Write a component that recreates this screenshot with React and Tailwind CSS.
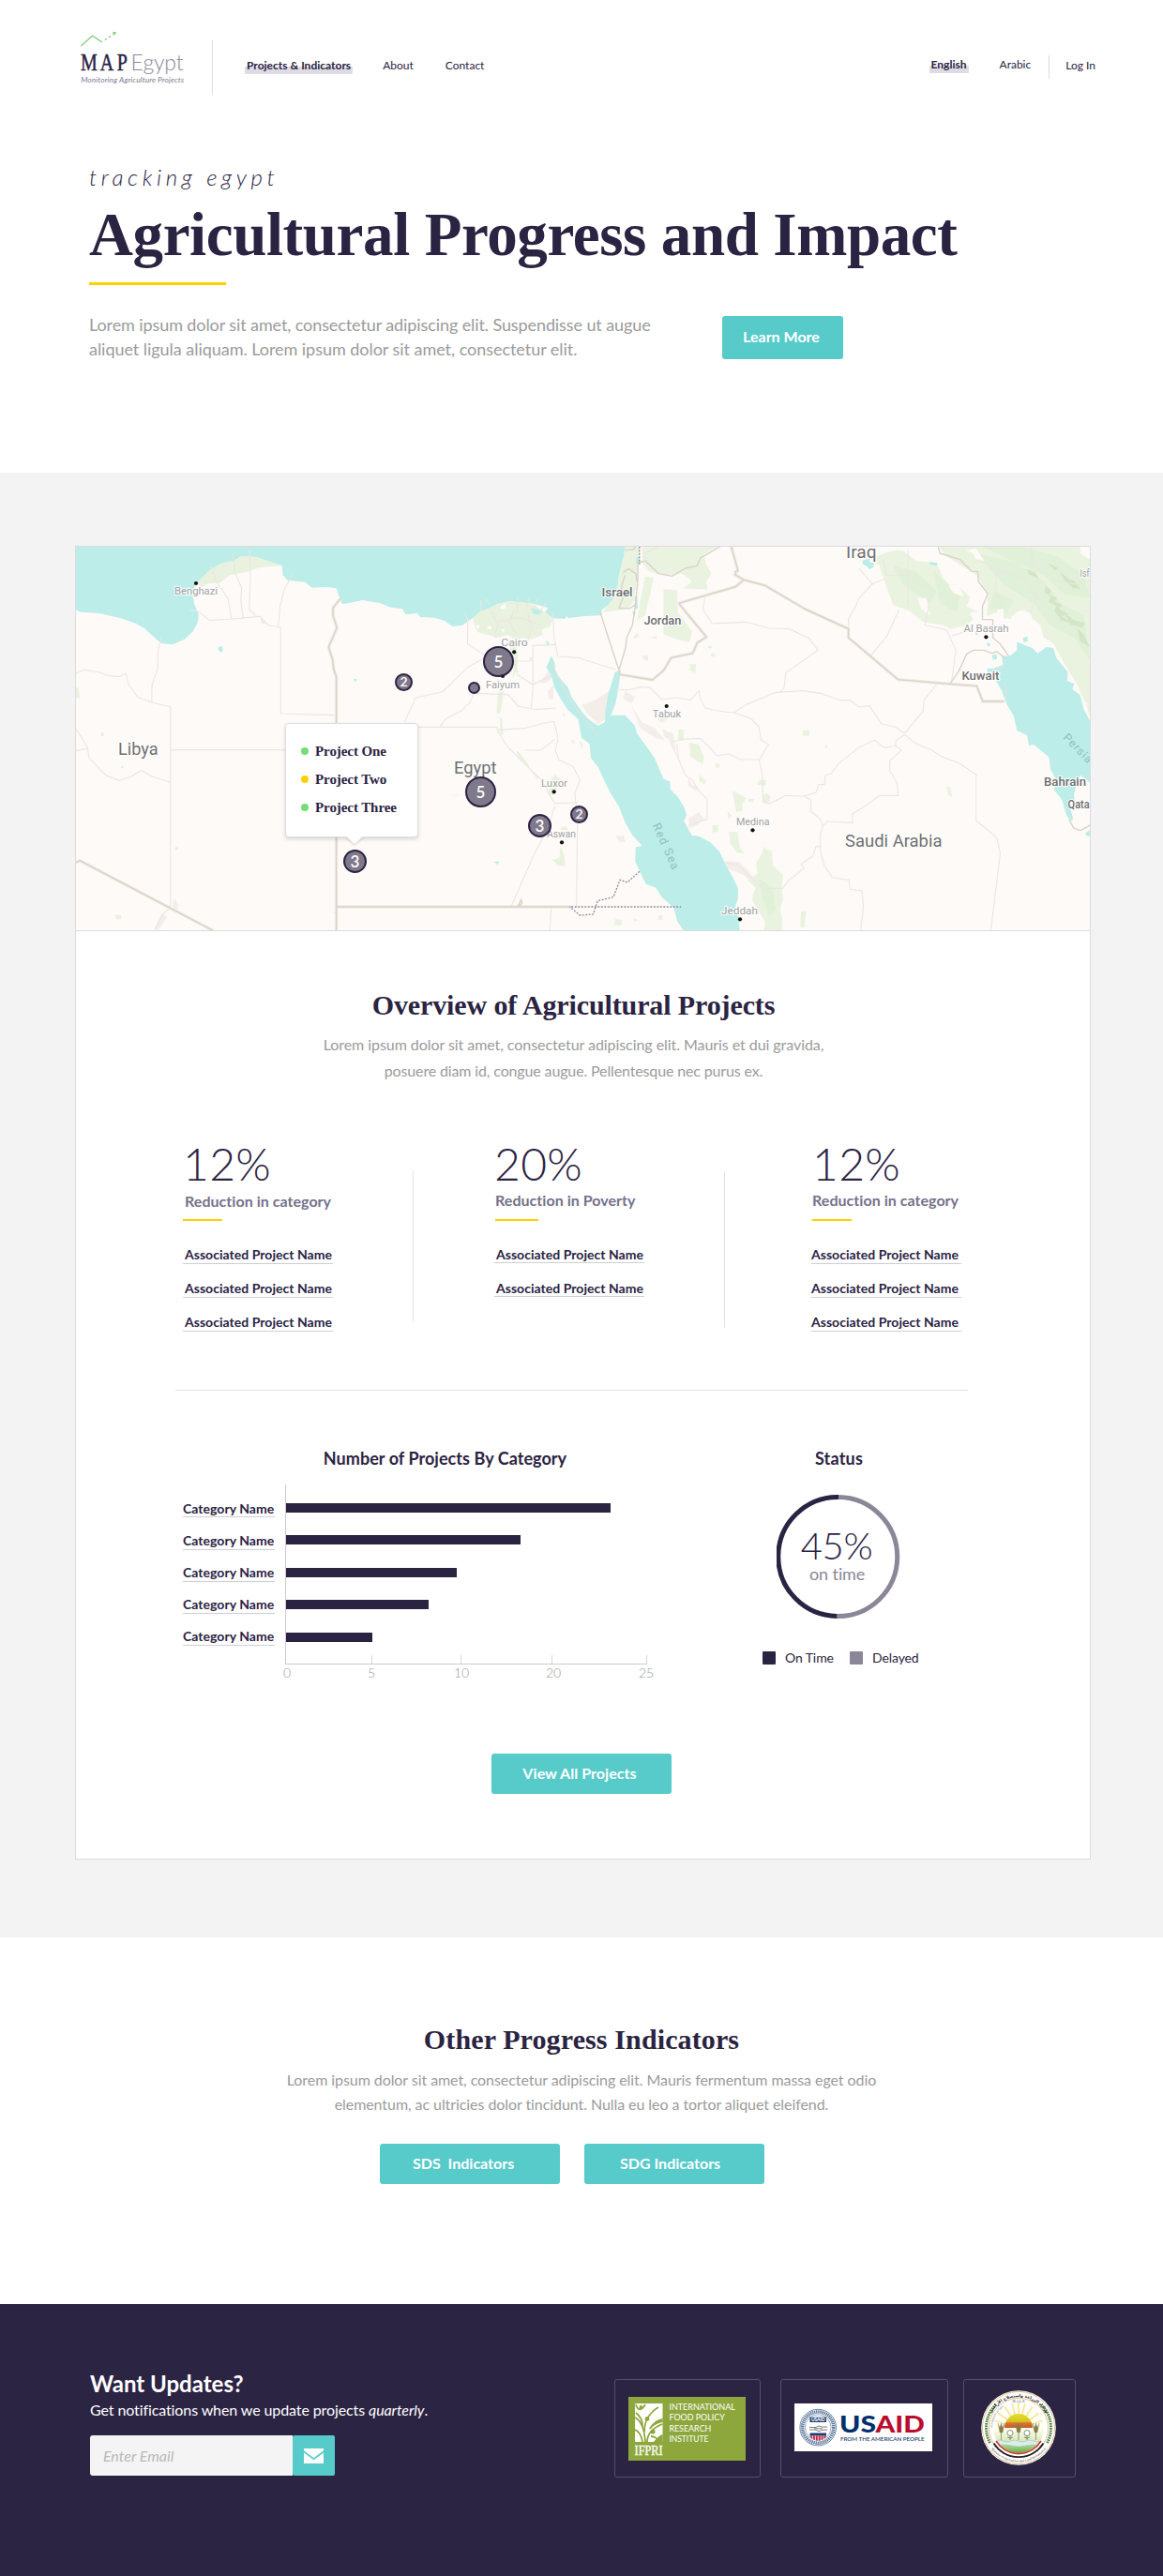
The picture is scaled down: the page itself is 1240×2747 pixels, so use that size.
import React from 'react';

const INK = '#2b2342';

function Logo() {
  return (
    <svg className="ml-[84px] mt-[30px] h-[64px] w-[116px] shrink-0" viewBox="84 30 116 64">
      <g fill="none" stroke="#8fd18a" strokeWidth="1.5">
        <path d="M86.4 49 L98.4 38.2 L108.8 44.8" />
        <path d="M111.8 42.6 L121.5 36" strokeDasharray="2.4 2.6" />
      </g>
      <path d="M119.8 34 H124 L122.4 38 Z" fill="#8fd18a" />
      <g transform="translate(86 75) scale(0.8 1)">
        <text fontFamily="Liberation Serif, serif" fontSize="25" fill={INK} stroke={INK} strokeWidth="0.5">
          <tspan x="0">M</tspan>
          <tspan x="26">A</tspan>
          <tspan x="48.5">P</tspan>
        </text>
      </g>
      <text x="139.6" y="75" fontFamily="Lato, sans-serif" fontWeight="300" fontSize="23" fill="#8a8799" textLength="56">Egypt</text>
      <text x="86.2" y="88.3" fontFamily="Lato, sans-serif" fontStyle="italic" fontSize="8.4" fill="#817d92" textLength="110">Monitoring Agriculture Projects</text>
    </svg>
  );
}

function Marked({ children }) {
  return (
    <span className="relative isolate block font-bold tracking-[0.01px]">
      <span className="absolute -left-[2px] -right-[2px] top-[9px] -z-10 h-[8px] bg-[#dddce2]" />
      {children}
    </span>
  );
}

function Header() {
  return (
    <header className="flex h-[120px] items-start text-[12px] leading-4 text-[#2b2342]">
      <Logo />
      <div className="ml-[26px] mt-[43px] h-[58px] w-px bg-[#dcdcdc]" />
      <nav className="ml-[36px] mt-[62px] flex">
        <Marked>Projects &amp; Indicators</Marked>
        <span className="ml-[34px]">About</span>
        <span className="ml-[34px]">Contact</span>
      </nav>
      <div className="ml-auto mr-[72px] mt-[59px] flex h-[25px] items-start">
        <span className="mt-[2px]"><Marked>English</Marked></span>
        <span className="ml-[35px] mt-[2px]">Arabic</span>
        <span className="ml-[19px] h-[25px] w-px bg-[#dcdcdc]" />
        <span className="ml-[17px] mt-[3px]">Log In</span>
      </div>
    </header>
  );
}

function Hero() {
  return (
    <section className="h-[384px] pl-[95px] pt-[53px]">
      <p className="text-[24px] font-light italic leading-8 tracking-[4.65px] text-[#2b2342]">tracking egypt</p>
      <h1 className="mt-[9px] whitespace-nowrap font-['Liberation_Serif',serif] text-[65px] font-bold leading-[72px] tracking-[-0.4px] text-[#2b2342]">
        Agricultural Progress and Impact
      </h1>
      <div className="mt-[15px] h-[3px] w-[146px] bg-[#ffd000]" />
      <div className="mt-[29px] flex items-start">
        <p className="w-[675px] text-[18px] leading-[26px] tracking-[-0.1px] text-[#9b9b9b]">
          Lorem ipsum dolor sit amet, consectetur adipiscing elit. Suspendisse ut augue
          <br />
          <span className="tracking-[-0.04px]">aliquet ligula aliquam. Lorem ipsum dolor sit amet, consectetur elit.</span>
        </p>
        <button className="mt-[4px] h-[46px] w-[129px] rounded-[3px] bg-[#56cbca] pb-[3px] pr-[3px] text-[16px] font-bold leading-5 text-white">Learn More</button>
      </div>
    </section>
  );
}

const cities = [
  ['Benghazi', 186, 634, 46], ['Cairo', 534.3, 688.7, 28.5], ['Faiyum', 518, 733.5, 36],
  ['Luxor', 577, 838.5, 28], ['Aswan', 583, 892.5, 31], ['Al Basrah', 1027.5, 673.5, 48],
  ['Tabuk', 695.7, 765, 30.5], ['Medina', 785, 880, 35.5], ['Jeddah', 769, 974.5, 39], ['Isf', 1151.5, 614.5, 10],
];
const smallCountries = [
  ['Israel', 641.5, 636, 33], ['Jordan', 686.4, 666, 40], ['Kuwait', 1025.4, 724.5, 40],
  ['Bahrain', 1113, 838, 45], ['Qata', 1138.6, 862, 23],
];
const bigCountries = [
  ['Libya', 126, 805, 42.5], ['Egypt', 484, 824.5, 45.5], ['Iraq', 902, 594.5, 32.5], ['Saudi Arabia', 901, 903, 103.5],
];
const dots = [
  [209, 622], [548.2, 695.3], [536, 721], [590.7, 844.3], [599, 898.3],
  [1051.4, 679.3], [710.7, 753], [802.5, 885.3], [789, 980.3],
];

function MapLabels({ items, size, fill, weight }) {
  return items.map(([t, x, y, w]) => (
    <text key={t} x={x} y={y} textLength={w} lengthAdjust="spacingAndGlyphs" fontSize={size} fill={fill} fontWeight={weight}
      stroke="#ffffff" strokeOpacity="0.8" strokeWidth="2.5" paintOrder="stroke" strokeLinejoin="round">{t}</text>
  ));
}

function MapDrawing() {
  return (
    <svg className="block h-[409px] w-[1081px]" viewBox="81 583 1081 409">
      <rect x="81" y="583" width="1081" height="409" fill="#fefaf7" />
      {/* western half */}
      <g transform="translate(70 570) scale(0.35714 0.33333)">
        <path fill="#bcede9" d="M30 30H1600V258L1568 260 1540 262 1500 268 1497 260 1490 270 1455 268 1430 250 1440 235 1400 222 1370 218 1325 214 1290 222 1262 238 1240 245 1215 268 1185 290 1155 294 1130 275 1100 266 1058 264 1050 252 1015 256 1005 238 970 233 940 220 885 210 850 218 825 222 817 200 808 172 780 168 735 170 715 152 662 146 648 130 646 100 600 84 570 72 525 70 500 85 465 92 430 115 405 140 388 158 378 190 385 225 397 255 395 280 380 310 355 335 320 352 285 348 260 325 235 300 210 285 165 268 100 252 45 248 30 240Z" />
        <g fill="#e9f2de">
          <path d="M388 158L430 115 465 92 500 85 525 70 570 72 600 84 646 100 580 105 540 120 490 130 460 155 425 157 410 168Z" />
          <path d="M1215 268L1240 245 1262 238 1290 222 1325 214 1370 218 1400 226 1440 255 1455 270 1445 295 1420 305 1425 320 1390 335 1360 330 1350 345 1320 320 1290 330 1230 312 1222 295Z" />
          <path d="M1335 340L1350 380 1348 430 1335 460 1340 400 1325 360Z" />
          <path d="M1296 490L1308 500 1303 540 1296 575 1286 570 1290 520ZM1296 585L1303 590 1306 640 1298 642ZM1345 690L1360 705 1385 740 1378 742 1355 720ZM1385 750L1415 778 1408 782ZM1445 790l16 -22 14 14 20 6 -30 25 -8 20 -16 2z" />
          <path d="M1478 995L1488 1025 1492 1062 1470 1060 1452 1040 1474 1035Z" />
          <path d="M30 490h8l4 32h-12zM105 633h9v12h-9zM146 1217h20v14h-14zM326 1002l10-6v12l-8 4zM1480 935h16l4 10h-22zM582 270h10l4 18-12-4zM165 740h8v8h-8zM1385 393h8v10h-8z" />
        </g>
        <g fill="#ffffff"><path d="M1300 228l14-6-2 14-12 4zM1222 290l14 0-4 12zM1300 300l10 6-4 10zM1256 300l12 -8 4 12z" /></g>
        <g fill="#f3eeea">
          <path d="M1415 475l30-45 8 30-20 14zM1440 500l18-20-4 50-12-6zM265 1262l20-50 18 12-25 40zM318 1195l4-32 16 22-6 16zM1155 835l12-5 8 3zM795 1210l14-8v10zM1532 660l14 10-4 20zM1482 570l8 4-2 16zM1508 655l12 6-4 14z" />
        </g>
        <g fill="#bcede9">
          <path d="M456 360l10-3 4 14-6 6-8-6zM858 460l14 4-8 7zM1278 1046l18 0-8 10zM1432 338l12 8-4 12z" />
          <path d="M1390 235l18 4 16 8-12 10-18-4z" />
        </g>
        <g fill="none" stroke="#ebe6e1" strokeWidth="1.1">
          <path vectorEffect="non-scaling-stroke" d="M30 445L55 433 100 440 130 452 160 455 180 445 188 480 215 520 257 537 313 552V1190M257 537L258 480 275 430 276 370 288 325M30 620L65 680 70 715 120 770 160 787 195 775 225 755 260 775 313 793M30 692L65 684M313 689H657M370 242L395 245 430 275 495 270 580 262 605 290 642 298V573L806 578M430 92L450 150 485 205 495 270M500 60L505 120 525 170 523 215 530 268M549 50L552 130 548 240 570 262M678 128L655 170 640 230 635 295" />
          <path vectorEffect="non-scaling-stroke" d="M1052 616H1288L1290 630 1320 680 1420 785 1460 860 1530 858M1012 600L1045 522 1125 503 1200 425 1290 370M1118 614L1135 590 1180 565 1205 540 1220 508 1320 512 1350 548 1400 560 1465 555M1200 270V350L1250 385M1290 625L1370 620 1420 605 1458 598 1470 650 1462 690 1472 720 1515 742 1535 785 1520 830 1528 900 1525 1190M1460 870L1440 940 1400 1020 1330 1190M1370 690L1420 690 1460 655M1395 355V490L1390 555M1395 405H1340M1395 355L1465 352M1455 250L1458 330 1470 390 1540 395M1450 1195L1445 1267M1240 210V245M1255 205L1265 225M1350 198L1348 250M1382 205L1375 240M1410 205L1398 240M1432 220L1418 245M1192 250L1202 275M1270 245L1290 290 1280 330M1340 240L1325 280 1345 320M1380 250L1390 300 1380 340M1290 280L1350 265 1420 290M1340 400L1350 450 1395 480 1470 440" />
          <path vectorEffect="non-scaling-stroke" d="M265 1267L290 1215 316 1190" />
        </g>
        <g fill="none" stroke="#efebe4" strokeWidth="3.4">
          <path vectorEffect="non-scaling-stroke" d="M820 205L798 235V260L810 298 785 360 797 400 800 430 808 455V1267M808 1191H1510M30 1050L42 1043 440 1267" />
        </g>
        <g fill="none" stroke="#d9d3c8" strokeWidth="1.4">
          <path vectorEffect="non-scaling-stroke" d="M820 205L798 235V260L810 298 785 360 797 400 800 430 808 455V1267M808 1191H1510M30 1050L42 1043 440 1267M1350 1190L1360 1168 1362 1180 1352 1192" />
        </g>
      </g>
      {/* eastern half */}
      <g transform="translate(620 570) scale(0.35714 0.33333)">
        <path fill="#bcede9" d="M-10 30H137L125 75 112 130 105 190 85 222 55 245 30 258 -10 262Z" />
        <g fill="#e9f3e0">
          <path d="M130 38L125 75 112 130 105 190 75 232 65 248 135 240 155 215 165 150 175 38Z" />
          <path d="M185 38H410L365 62 372 95 388 125 372 152 376 176 305 172 330 150 300 125 250 130 205 120 180 90ZM183 172L190 135 215 138 205 190 190 258 165 275ZM245 175L285 178 288 250 330 310 322 345 285 335 245 320ZM205 330l22-6-4 10zM182 388h18l-2 16-14-4zM320 415l22 0-2 28-22-12 10-6zM378 356h12v8h-12zM386 380l14 2-2 12-12-4zM155 325l12-10 6 12-16 6z" />
          <path d="M860 75L935 50 960 52 1000 85 1060 90 1080 140 1100 162 1120 160 1160 200 1150 230 1182 245 1180 262 1150 290 1105 302 1080 290 1020 280 980 245 930 225 905 150 890 100Z" />
          <path d="M1060 30H1530V565L1500 530 1480 480 1440 410 1410 350 1380 330 1370 290 1330 255 1285 270 1260 268 1240 250 1210 260 1213 190 1180 130 1090 70Z" />
          <path d="M1505 540l13 10v30z" />
          <path d="M290 624h16l-2 38-16-6zM322 665L350 672 366 715 362 735 325 710ZM240 620l22 14 10 22-22-6zM350 768l22 20-4 12-16-10zM400 732h12v14h-12zM660 628l20-4v20h-20zM726 672l10 6-6 6zM1090 805l12 4 4 32-12-10zM450 820L492 842 480 862 480 885 462 888ZM530 785h22l-4 20-24-6zM540 835l12-8 12 10-4 20-18 2zM498 846h16v10h-16zM440 950l26 2 6 48 16 22-26-6-18-30zM435 885l14 14-10 12zM655 1205h16l-6 54-12-4zM390 930h18v20l-16 4zM225 590l35-5-20 18zM100 1230l22 4-4 18-20-4zM230 1218l12 0 0 14-14 0zM155 1228l16 6-14 4z" />
          <path d="M545 995L552 1008 568 1012 572 1060 602 1090 598 1130 602 1170 592 1195 600 1230 598 1267H545L548 1240 510 1170 512 1150 520 1130 495 1105 525 1085 522 1050 540 1020Z" />
        </g>
        <g fill="#dcefd2" opacity="0.6">
          <path d="M1180 60L1300 90 1380 150 1430 220 1500 260 1518 400 1470 330 1400 290 1350 220 1260 160ZM1200 38L1310 38 1420 70 1500 130 1518 200 1440 190 1380 130 1280 80ZM1230 180L1290 210 1270 250 1220 230ZM930 100L1000 120 1060 180 1040 220 960 160ZM1050 110L1080 150 1130 190 1120 250 1070 220ZM530 1100L570 1130 580 1200 560 1220 540 1160Z" />
        </g>
        <g fill="#c2d6ae" opacity="0.42">
          <path d="M1385 165l18 14-6 14 24 10-12 10 26 12-10 12 30 18-22 6 30 22-30-8-20-30 4-18-22-12 6-16-18-14zM1430 120l22 20 20 10 18 24-24-4-26-26zM1440 250l30 24 34 10-10 14-34-10zM1390 90l34 18-10 8z" />
          <path d="M1330 110l24 10 12 20-30-12zM1480 300l20 20 18 40-30-20z" />
        </g>
        <g fill="#fefaf7">
          <path d="M1095 165l30-6 16 40-28-10zM1002 202l28 2 10 54-26-20zM1240 240l20-2 0 28-18 0zM1282 265l20-20 20-2 20 12 4 18-14 10-12-4-6 20-16 4-6-18zM1160 250l30-4 4 26-24 4zM1488 40h32v42l-30-20zM1178 80l-10-20-20-10 30-6 24 40z" />
        </g>
        <g fill="#f3eeea">
          <path d="M0 545L40 530 90 495 72 590 50 608 20 575ZM150 550l30 50 40 20 30 40-30-10-44-30zM250 630l24 6 8 60 20 50-30-60zM320 780l10 20 20 10-10 10-24-20zM100 965l26-2 6 20-16 0zM320 908l30-20 16 22-20 20-26 10zM430 1045l40 2 30 30 20 40-40-30-50-20zM380 1185l24-4-8 30-12-6zM330 1240l30-6 12 30-30-6zM130 500l30 20-10 20-26-14zM300 1235l18 10-8 12z" />
        </g>
        <g fill="#bcede9">
          <path d="M-90 388L-80 410 -78 440 -60 465 -40 490 -30 520 0 565 20 590 50 612 70 600 72 560 80 510 100 440 117 434 112 480 102 540 88 578 130 578 160 612 165 635 190 672 218 715 245 782 264 790 265 815 288 840 308 875 314 900 305 915 322 948 330 963 350 965 385 985 412 1015 432 1060 448 1090 467 1130 467 1165 458 1195 470 1225 472 1267H305L285 1235 276 1195 240 1160 222 1130 192 1118 175 1080 160 1045 162 1000 182 996 152 962 130 920 112 870 88 830 70 792 50 745 28 715 24 670 0 650 -5 620 -10 590 -40 562 -60 530 -80 490 -90 450 -105 425Z" />
          <path d="M1255 390L1280 388 1300 370 1300 343 1325 355 1345 362 1362 380 1388 360 1408 363 1418 395 1452 440 1450 468 1472 478 1465 495 1488 512 1500 560 1525 610V800L1490 770 1478 800 1470 830 1473 860 1452 850 1467 905 1465 918 1448 900 1435 850 1410 815 1420 790 1400 750 1395 712 1350 672 1336 675 1330 642 1300 627 1290 580 1268 540 1255 500 1238 470 1248 440 1212 440 1210 430 1230 428 1258 418Z" />
          <path d="M1505 955l15-12v24l-14-4zM1318 330l14-4 0 16-12 2zM1226 385l14 0 0 14-12 2zM1210 346l10 2 0 10-8 0zM1040 88l22 2-2 10-20-4zM838 85l20-10 4 14 12 2-4 16-12 4-6-10-12-6zM163 72h10v20h-10zM158 200l8-4 2 40-8 4zM152 245l10 4-6 20zM1176 310h8v10h-8z" />
        </g>
        <g fill="none" stroke="#ebe6e1" strokeWidth="1.1">
          <path vectorEffect="non-scaling-stroke" d="M105 497L140 497 175 488 205 490 240 528 285 522 325 530 350 500 356 530 370 555 410 565 455 570 505 588 530 615 535 655 558 672 530 722 540 765 542 855 560 862 610 835 665 837 685 850V885L712 910 720 932 713 960V1010L725 1060 750 1098 798 1105 802 1135 837 1140 842 1190 833 1267" />
          <path vectorEffect="non-scaling-stroke" d="M455 570L490 545 580 505 660 500 715 508 770 530 800 530 830 552 860 548 895 605 935 615 965 635 1020 565 1022 530 1060 480M965 640L940 658 937 675 955 690 920 725V755L942 795 945 835H890L845 870 808 895 810 922 735 918 720 932M965 640L1000 670 1045 690 1075 710 1125 730 1178 768V915L1240 970 1250 1020 1222 1267M937 675L905 682 875 658 830 680 770 730 745 765 728 770 725 800 708 800 700 825 665 837" />
          <path vectorEffect="non-scaling-stroke" d="M370 195L362 240 390 285 490 280 560 300 620 302 680 332 706 370 610 442 605 490 592 505M270 665L300 655 355 652 390 690 405 708 440 702 475 720 528 720M285 670L290 720 310 770 330 785 350 820 375 845V910L325 930M865 385L912 325 948 240M797 300V270L820 225 828 205 868 158 830 110M868 158L905 142M900 80L910 130 980 130 1005 160 1035 165V240L1025 290 1090 305 1118 370 1105 470M975 50L975 230M1105 325L1150 310M430 1050L465 1055 500 1090 540 1130 600 1133 620 1105 665 1068 655 1055 690 1030 700 998H713M0 398L50 415 105 432M180 40L195 90M190 60L230 38M120 130L140 108 160 115" />
          <path vectorEffect="non-scaling-stroke" d="M1180 80L1240 110 1320 140 1360 200 1340 250M1240 110L1235 180 1260 230M1340 38L1350 100 1420 150 1490 160" />
        </g>
        <g fill="none" stroke="#dfe3de" strokeWidth="1.2"><path vectorEffect="non-scaling-stroke" d="M-90 410L-50 500 0 580 55 650M1230 430l42-4M1260 470l12 55" /></g>
        <g fill="none" stroke="#efebe4" strokeWidth="3.4">
          <path vectorEffect="non-scaling-stroke" d="M290 220L460 167 485 145 548 163 665 237 797 302V330L945 464 1100 478 1180 485 1198 534 1262 534M445 30L467 115 458 128 485 145M290 220L373 328 345 347 332 380 268 394 245 435 212 465 115 448" />
        </g>
        <g fill="none" stroke="#d9d3c8" strokeWidth="1.4" strokeLinejoin="round">
          <path vectorEffect="non-scaling-stroke" d="M290 220L460 167 485 145 548 163 665 237 797 302V330L945 464 1100 478 1180 485 1198 534 1262 534M445 30L467 115 458 118 460 130 485 145M290 220L373 328 345 347 332 380 268 394 245 435 212 465 115 448M55 245L80 330 112 434 115 448M168 85V150L160 235 152 290 135 330 132 360 112 434M415 38L355 75 345 100 310 108 270 133 230 125 205 98 190 85 168 90M130 130L120 165 125 200 112 236 145 236 160 225M125 120L140 110 162 125 165 150M1100 478L1125 440 1150 382 1170 370 1200 370 1225 380 1240 375 1265 395M1065 40L1070 60 1130 80 1165 118 1183 118 1185 150 1213 190 1197 230V272H1228V330L1250 350 1275 388M1455 910L1470 940 1490 947 1518 930M130 50L155 48 162 40" />
        </g>
        <path fill="none" stroke="#8f8c99" strokeWidth="1.3" strokeDasharray="2 1.5" vectorEffect="non-scaling-stroke" d="M-30 1191H297M173 1078L137 1113 115 1105 95 1160 48 1172 35 1215 0 1218 -5 1218 -35 1191M173 38V95" />
      </g>
      {dots.map(([x, y]) => <circle key={x} cx={x} cy={y} r="2.1" fill="#111" />)}
      <g fontFamily="Roboto, sans-serif">
        <MapLabels items={cities} size="11.5" fill="#a0a0a0" weight="400" />
        <MapLabels items={smallCountries} size="13" fill="#6e6e6e" weight="500" />
        <MapLabels items={bigCountries} size="18" fill="#707070" weight="400" />
        <g fill="#8fc0bf" fontSize="12.5" letterSpacing="1.2">
          <text transform="translate(695.5 880) rotate(66)">Red Sea</text>
          <text transform="translate(1133 787) rotate(46)" fontSize="12" letterSpacing="0.9">Persia</text>
        </g>
      </g>
    </svg>
  );
}

const pins = [
  { n: '5', cls: 'left-[434px] top-[106px] size-[33px] text-[17px] leading-[29px]' },
  { n: '2', cls: 'left-[340px] top-[135px] size-[19px] text-[14px] leading-[14px]' },
  { n: '', cls: 'left-[418px] top-[144px] size-[13px]' },
  { n: '5', cls: 'left-[415px] top-[245px] size-[33px] text-[17px] leading-[29px]' },
  { n: '3', cls: 'left-[482px] top-[285px] size-[25px] text-[17px] leading-[21px]' },
  { n: '2', cls: 'left-[527px] top-[276px] size-[19px] text-[14px] leading-[14px]' },
  { n: '3', cls: 'left-[285px] top-[323px] size-[25px] text-[17px] leading-[21px]' },
];

function MapPanel() {
  return (
    <div className="relative h-[410px] overflow-hidden border-b border-[#dcdcdc]">
      <MapDrawing />
      {pins.map((p, i) => (
        <span key={i} className={`absolute block rounded-full border-2 border-[#2b2342] bg-[#2b2342]/60 text-center font-semibold text-white ${p.cls}`}>{p.n}</span>
      ))}
      <div className="absolute left-[223px] top-[188px] h-[122px] w-[142px] rounded-[4px] border border-[#dedede] bg-white pl-[16px] pt-[14px] font-['Liberation_Serif',serif] text-[15px] font-bold leading-[30px] tracking-[-0.08px] text-[#2b2342] shadow-[0_2px_4px_rgba(0,0,0,0.15)]">
        <div className="flex items-center"><i className="mr-[7px] size-2 rounded-full bg-[#74dd78]" />Project One</div>
        <div className="flex items-center"><i className="mr-[7px] size-2 rounded-full bg-[#ffd000]" />Project Two</div>
        <div className="flex items-center"><i className="mr-[7px] size-2 rounded-full bg-[#74dd78]" />Project Three</div>
        <svg className="absolute left-[63px] top-[119px] h-[11px] w-[20px] drop-shadow-[0_2px_1px_rgba(0,0,0,0.12)]" viewBox="0 0 20 11">
          <path d="M0 0H20L10 9Z" fill="#fff" />
        </svg>
      </div>
    </div>
  );
}

function Stat({ value, label, count, top, labelTop, indent, bar, link, pad }) {
  return (
    <div className="w-[245px]">
      <div className={`text-[48px] font-light leading-[56px] tracking-[0.3px] text-[#2b2342] ${top}`}>{value}</div>
      <div className={`text-[16px] font-bold leading-5 tracking-[0.04px] text-[#75718a] ${labelTop} ${indent}`}>{label}</div>
      <div className={`h-[2px] bg-[#ffd000] ${bar}`} />
      <div className="mt-[26px]">
        {Array.from({ length: count }, (_, i) => (
          <div key={i} className={`w-[160px] whitespace-nowrap border-b border-[#cfcdd6] text-[14px] font-bold leading-[19px] tracking-[0.03px] text-[#2b2342] ${link} ${pad}`}>Associated Project Name</div>
        ))}
      </div>
    </div>
  );
}

const bars = [
  'mt-[20px] w-[346px]', 'mt-[24px] w-[250px]', 'mt-[25px] w-[182px]', 'mt-[24px] w-[152px]', 'mt-[25px] w-[92px]',
];

function BarChart() {
  return (
    <div className="w-[510px]">
      <h3 className="pl-[49px] text-center text-[18px] font-bold leading-6 tracking-[0.05px]">Number of Projects By Category</h3>
      <div className="mt-[16px] flex">
        <div className="w-[109px] pt-[18px] text-[14px] font-bold leading-4 tracking-[0.03px]">
          {bars.map((b, i) => (
            <div key={b} className={`w-[98px] border-b border-[#cfcdd6] ${i === 0 ? 'mb-[17px] h-[17px]' : 'mb-[16px] h-[18px]'}`}>Category Name</div>
          ))}
        </div>
        <div className="flex h-[192px] w-[386px] flex-col border-b border-l border-[#cbcbcf]">
          {bars.map((b) => <div key={b} className={`h-[10px] shrink-0 bg-[#2b2342] ${b}`} />)}
          <div className="mt-auto flex h-[9px]">
            <i className="ml-[91px] w-px bg-[#d6d6da]" />
            <i className="ml-[94px] w-px bg-[#d6d6da]" />
            <i className="ml-[96px] w-px bg-[#d6d6da]" />
            <i className="ml-[100px] w-px bg-[#d6d6da]" />
          </div>
        </div>
      </div>
      <div className="flex pl-[95px] text-center text-[14px] font-light leading-[18px] text-[#999]">
        <span className="w-8">0</span>
        <span className="ml-[58px] w-8">5</span>
        <span className="ml-[64px] w-8">10</span>
        <span className="ml-[66px] w-8">20</span>
        <span className="ml-[67px] w-8">25</span>
      </div>
    </div>
  );
}

function StatusChart() {
  return (
    <div className="ml-[89px] w-[201px]">
      <h3 className="text-center text-[18px] font-bold leading-6 tracking-[0.2px]">Status</h3>
      <svg className="ml-[34px] mt-[27px] block size-[132px]" viewBox="0 0 132 132">
        <g fill="none" strokeWidth="5">
          <path d="M66 2.5 A63.5 63.5 0 0 1 64.5 129.5" stroke="#8b8698" />
          <path d="M66 2.5 A63.5 63.5 0 0 0 64.5 129.5" stroke={INK} />
        </g>
        <text x="64" y="68.5" textAnchor="middle" fontWeight="300" fontSize="40" letterSpacing="-0.3" fill={INK}>45%</text>
        <text x="64.6" y="91" textAnchor="middle" fontSize="18" letterSpacing="-0.1" fill="#8b8698">on time</text>
      </svg>
      <div className="mt-[32px] flex h-5 items-center whitespace-nowrap pl-[19px] text-[14px] leading-5 tracking-[-0.1px]">
        <i className="size-[14px] rounded-[1px] bg-[#2b2342]" />
        <span className="ml-[10px] w-[52px]">On Time</span>
        <i className="ml-[17px] size-[14px] rounded-[1px] bg-[#8b8698]" />
        <span className="ml-[10px]">Delayed</span>
      </div>
    </div>
  );
}

function ProjectsCard() {
  return (
    <div className="ml-[80px] h-[1401px] w-[1083px] border border-[#dcdcdc] bg-white">
      <MapPanel />
      <div className="pr-[20px] pt-[59px] text-center">
        <h2 className="font-['Liberation_Serif',serif] text-[30px] font-bold leading-10 tracking-[-0.12px] text-[#2b2342]">Overview of Agricultural Projects</h2>
        <p className="mt-[8px] text-[16px] leading-7 tracking-[-0.06px] text-[#9b9b9b]">
          Lorem ipsum dolor sit amet, consectetur adipiscing elit. Mauris et dui gravida,
          <br />
          <span className="tracking-[-0.14px]">posuere diam id, congue augue. Pellentesque nec purus ex.</span>
        </p>
      </div>
      <div className="mt-[57px] flex h-[269px] pl-[114px]">
        <Stat value="12%" label="Reduction in category" count={3} top="" labelTop="mt-[2px]" indent="pl-[2px]" bar="mt-[9px] w-[42px]" link="mb-[16px] h-[20px]" pad="pl-[2px]" />
        <div className="mt-[36px] h-[160px] w-px bg-[#e2e2e4]" />
        <div className="ml-[86px]">
          <Stat value="20%" label="Reduction in Poverty" count={2} top="" labelTop="mt-[1px]" indent="pl-[1px]" bar="ml-[1px] mt-[10px] w-[46px]" link="mb-[17px] h-[19px]" pad="pl-[2px]" />
        </div>
        <div className="mt-[36px] h-[167px] w-px bg-[#e2e2e4]" />
        <div className="ml-[92px]">
          <Stat value="12%" label="Reduction in category" count={3} top="pl-[1px]" labelTop="mt-[1px]" indent="pl-[1px]" bar="ml-[1px] mt-[10px] w-[42px]" link="mb-[16px] h-[20px]" pad="" />
        </div>
      </div>
      <div className="ml-[106px] h-px w-[845px] bg-[#e2e2e4]" />
      <div className="mt-[60px] flex h-[250px] pl-[114px] text-[#2b2342]">
        <BarChart />
        <StatusChart />
      </div>
      <button className="ml-[443px] mt-[77px] h-[43px] w-[192px] rounded-[3px] bg-[#56cbca] pb-[2px] pr-[4px] text-[16px] font-bold leading-5 tracking-[0.05px] text-white">View All Projects</button>
    </div>
  );
}

function OtherIndicators() {
  return (
    <section className="flex h-[391px] flex-col items-center pt-[89px] text-center">
      <h2 className="font-['Liberation_Serif',serif] text-[30px] font-bold leading-10 tracking-[0.12px] text-[#2b2342]">Other Progress Indicators</h2>
      <p className="mt-[10px] text-[16px] leading-[26px] tracking-[-0.07px] text-[#9b9b9b]">
        Lorem ipsum dolor sit amet, consectetur adipiscing elit. Mauris fermentum massa eget odio
        <br />
        elementum, ac ultricies dolor tincidunt. Nulla eu leo a tortor aliquet eleifend.
      </p>
      <div className="mr-[20px] mt-[29px] flex gap-[26px] text-left text-[16px] font-bold leading-5 tracking-[0.01px] text-white">
        <button className="h-[43px] w-[192px] whitespace-pre rounded-[3px] bg-[#56cbca] pb-[2px] pl-[35px] text-left">SDS  Indicators</button>
        <button className="h-[43px] w-[192px] rounded-[3px] bg-[#56cbca] pb-[2px] pl-[38px] text-left">SDG Indicators</button>
      </div>
    </section>
  );
}

function IfpriLogo() {
  return (
    <svg className="h-[68px] w-[125px]" viewBox="0 0 125 68">
      <rect width="125" height="68" fill="#8da73c" />
      <rect x="7" y="7" width="29.5" height="41" fill="#fff" />
      <g fill="none" stroke="#8da73c" strokeWidth="1.8">
        <path d="M7 22C13 25 17 32 18 48" />
        <path d="M17 37C17 27 22 17 32 11" />
        <path d="M15 31C15 25 12 20 8 17M20 48C20 41 24 34 36 29M24 42C28 42 32 45 33 48M7 35C12 37 14 42 15 48" />
        <path d="M8 8C10 15 14 15 18 8" />
      </g>
      <g fill="#8da73c">
        <circle cx="13.4" cy="11" r="1.9" /><circle cx="20" cy="23.4" r="2.4" /><circle cx="26" cy="37" r="2.6" />
        <path d="M22 34C26 27 31 24 36.5 23V27C31 28 27 30 24 34ZM27 48C30 44 33 41 36.5 40V48Z" />
      </g>
      <g fontFamily="Lato, sans-serif" fontSize="9.4" fill="#fff">
        <text x="43.4" y="14" textLength="70.5" lengthAdjust="spacingAndGlyphs">INTERNATIONAL</text>
        <text x="43.4" y="25.3" textLength="59.5" lengthAdjust="spacingAndGlyphs">FOOD POLICY</text>
        <text x="43.4" y="36.6" textLength="45" lengthAdjust="spacingAndGlyphs">RESEARCH</text>
        <text x="43.4" y="47.8" textLength="42" lengthAdjust="spacingAndGlyphs">INSTITUTE</text>
      </g>
      <text x="6.6" y="61.5" fontFamily="Liberation Serif, serif" fontSize="15.5" fill="#fff" stroke="#fff" strokeWidth="0.4" textLength="30" lengthAdjust="spacingAndGlyphs">IFPRI</text>
    </svg>
  );
}

function UsaidLogo() {
  return (
    <svg className="h-[51px] w-[147px]" viewBox="0 0 147 51">
      <rect width="147" height="51" fill="#fff" />
      <circle cx="25.2" cy="25.6" r="19.3" fill="#fff" stroke="#6f88a8" strokeWidth="1" />
      <circle cx="25.2" cy="25.6" r="16.6" fill="none" stroke="#5f7b9f" strokeWidth="3.6" strokeDasharray="1.4 0.7" />
      <circle cx="25.2" cy="25.6" r="13.8" fill="#fff" stroke="#6f88a8" strokeWidth="0.7" />
      <rect x="16.5" y="14.6" width="17.5" height="5.4" fill="#1c3f73" />
      <text x="18" y="19.2" fontFamily="Lato, sans-serif" fontSize="5" fontWeight="900" fill="#fff" textLength="14.5">USAID</text>
      <path d="M16 25.5h7l3-1.6 3 1.2h6M16 28h6l4 1.6 4-1.4h5M21 26.8h9" fill="none" stroke="#6b6b6b" strokeWidth="0.9" />
      <path d="M16.5 31.5H34V34.5H16.5Z" fill="#1c3f73" />
      <path d="M16.5 34.5H34C33.5 37.5 29 39 25.2 40C21.5 39 17 37.5 16.5 34.5Z" fill="#c22a48" />
      <path d="M19.5 34.5v4M22.4 34.5v5M25.3 34.5v5.5M28.2 34.5v5M31 34.5v4" stroke="#fff" strokeWidth="0.8" />
      <g fontFamily="Lato, sans-serif" fontWeight="900" fontSize="25.5">
        <text x="48" y="31.2" fill="#002f6c" textLength="39" lengthAdjust="spacingAndGlyphs">US</text>
        <text x="86.5" y="31.2" fill="#ba0c2f" textLength="52.5" lengthAdjust="spacingAndGlyphs">AID</text>
      </g>
      <text x="49" y="40.2" fontFamily="Lato, sans-serif" fontWeight="600" fontSize="6.4" fill="#1c3f73" textLength="89.5" lengthAdjust="spacingAndGlyphs">FROM THE AMERICAN PEOPLE</text>
    </svg>
  );
}

function MinistrySeal() {
  return (
    <svg className="size-[80px]" viewBox="-40 -40 80 80">
      <defs>
        <linearGradient id="sun" x1="0" y1="0" x2="0" y2="1">
          <stop offset="0" stopColor="#e2e02a" /><stop offset="0.55" stopColor="#d8c51f" /><stop offset="0.65" stopColor="#d9792c" /><stop offset="1" stopColor="#c25a2b" />
        </linearGradient>
        <linearGradient id="field" x1="0" y1="0" x2="0" y2="1">
          <stop offset="0" stopColor="#fffef2" /><stop offset="0.5" stopColor="#dbe8bf" /><stop offset="1" stopColor="#5aa83c" />
        </linearGradient>
        <clipPath id="disc"><circle r="27" /></clipPath>
        <path id="arcTop" d="M-33 0A33 33 0 0 1 33 0" />
        <path id="arcInner" d="M-28 0A28 28 0 0 1 28 0" />
        <path id="arcBottom" d="M-36.6 0A36.6 36.6 0 0 0 36.6 0" />
      </defs>
      <circle r="39.8" fill="#fff" />
      <circle r="38.6" fill="none" stroke="#d9b36a" strokeWidth="0.8" />
      <path d="M-30.5 16A34.5 34.5 0 0 1 -24 -25M30.5 16A34.5 34.5 0 0 0 24 -25" fill="none" stroke="#4d7f45" strokeWidth="3" strokeDasharray="1.6 0.9" />
      <circle r="31.6" fill="none" stroke="#d9b36a" strokeWidth="0.8" />
      <g clipPath="url(#disc)">
        <rect x="-28" y="-28" width="56" height="56" fill="#fffef6" />
        <path d="M0 0L-27 -8M0 0L-22 -16M0 0L-15 -23M0 0L-7 -26M0 0L0 -27M0 0L7 -26M0 0L15 -23M0 0L22 -16M0 0L27 -8" stroke="#f5e79a" strokeWidth="1.6" />
        <rect x="-28" y="0" width="56" height="28" fill="url(#field)" />
        <path d="M-15 0A15 15 0 0 1 15 0Z" fill="url(#sun)" />
        <g stroke="#7b8a4c" strokeWidth="0.8" fill="#8a7a45">
          <path d="M-18.5 13V4M0 13V4M18.5 13V4" fill="none" />
          <path d="M-22 -5L-20 5H-17L-15 -5L-17 0L-18.5 -5L-20 0ZM-3.5 -5L-1.5 5H1.5L3.5 -5L1.5 0L0 -5L-1.5 0ZM15 -5L17 5H20L22 -5L20 0L18.5 -5L17 0Z" strokeWidth="0.3" />
        </g>
        <g fill="#fff" stroke="#59663d" strokeWidth="0.7">
          <circle cx="-9" cy="5.5" r="3" /><circle cx="9" cy="5.5" r="3" />
          <path d="M-9 8.5V13M9 8.5V13M-12 10q3 2 6 0M6 10q3 2 6 0" fill="none" />
        </g>
        <path d="M-24 14Q-20 12 -16 14T-8 14T0 14T8 14T16 14T24 14V19Q16 17 8 19T-8 19T-24 19Z" fill="#d8efe8" stroke="#8dbdb0" strokeWidth="0.5" />
      </g>
      <path d="M-24 14A28 28 0 0 0 24 14" fill="none" stroke="#d8332c" strokeWidth="1.6" />
      <path d="M-25.5 15.2A29.7 29.7 0 0 0 25.5 15.2" fill="none" stroke="#fff" strokeWidth="1.6" />
      <path d="M-26.5 16.5A31.3 31.3 0 0 0 26.5 16.5" fill="none" stroke="#222" strokeWidth="1.8" />
      <text fontFamily="DejaVu Sans, sans-serif" fontSize="4.4" fontWeight="bold" fill="#222" textAnchor="middle">
        <textPath href="#arcTop" startOffset="50%">وزارة الزراعة واستصلاح الأراضى</textPath>
      </text>
      <text y="-27.4" fontFamily="Liberation Serif, serif" fontSize="3.6" fill="#555" textAnchor="middle">M.A.L.R</text>
      <text fontFamily="Liberation Serif, serif" fontSize="3.6" fill="#444" textAnchor="middle">
        <textPath href="#arcBottom" startOffset="50%">Ministry of Agriculture and Land Reclamation</textPath>
      </text>
      <text fontFamily="Liberation Serif, serif" fontSize="2.8" fill="#666">
        <textPath href="#arcInner" startOffset="0%">Arab Republic of Egypt</textPath>
      </text>
    </svg>
  );
}

function Footer() {
  return (
    <footer className="flex h-[290px] items-start bg-[#2c2443] pl-[96px] text-white">
      <div className="w-[559px] pt-[70px]">
        <h3 className="text-[24px] font-bold leading-[30px]">Want Updates?</h3>
        <p className="mt-[3px] text-[16px] leading-5 tracking-[-0.1px]">Get notifications when we update projects <em>quarterly</em>.</p>
        <div className="mt-[17px] flex">
          <div className="h-[43px] w-[216px] rounded-l-[3px] bg-[#f4f4f4] pl-[14px] text-[16px] italic leading-[43px] text-[#b9b9b9]">Enter Email</div>
          <button className="flex h-[43px] w-[45px] items-center justify-center rounded-[2px] bg-[#56cbca]">
            <svg className="h-[16px] w-[21px]" viewBox="0 0 21 16">
              <rect width="21" height="16" fill="#fff" />
              <path d="M-0.5 3L10.5 11.2L21.5 3" fill="none" stroke="#56cbca" strokeWidth="1.7" />
            </svg>
          </button>
        </div>
      </div>
      <div className="mt-[80px] flex h-[105px] w-[156px] justify-center rounded-[3px] border border-[#575069] pr-[1px] pt-[18px]"><IfpriLogo /></div>
      <div className="ml-[21px] mt-[80px] flex h-[105px] w-[179px] justify-center rounded-[3px] border border-[#575069] pr-[2px] pt-[25px]"><UsaidLogo /></div>
      <div className="ml-[16px] mt-[80px] flex h-[105px] w-[120px] justify-center rounded-[3px] border border-[#575069] pr-[2px] pt-[11px]"><MinistrySeal /></div>
    </footer>
  );
}

export default function App() {
  return (
    <div className="w-[1240px] bg-white font-['Lato',sans-serif]">
      <Header />
      <Hero />
      <section className="h-[1562px] bg-[#f3f3f3] pt-[78px]">
        <ProjectsCard />
      </section>
      <OtherIndicators />
      <Footer />
    </div>
  );
}
